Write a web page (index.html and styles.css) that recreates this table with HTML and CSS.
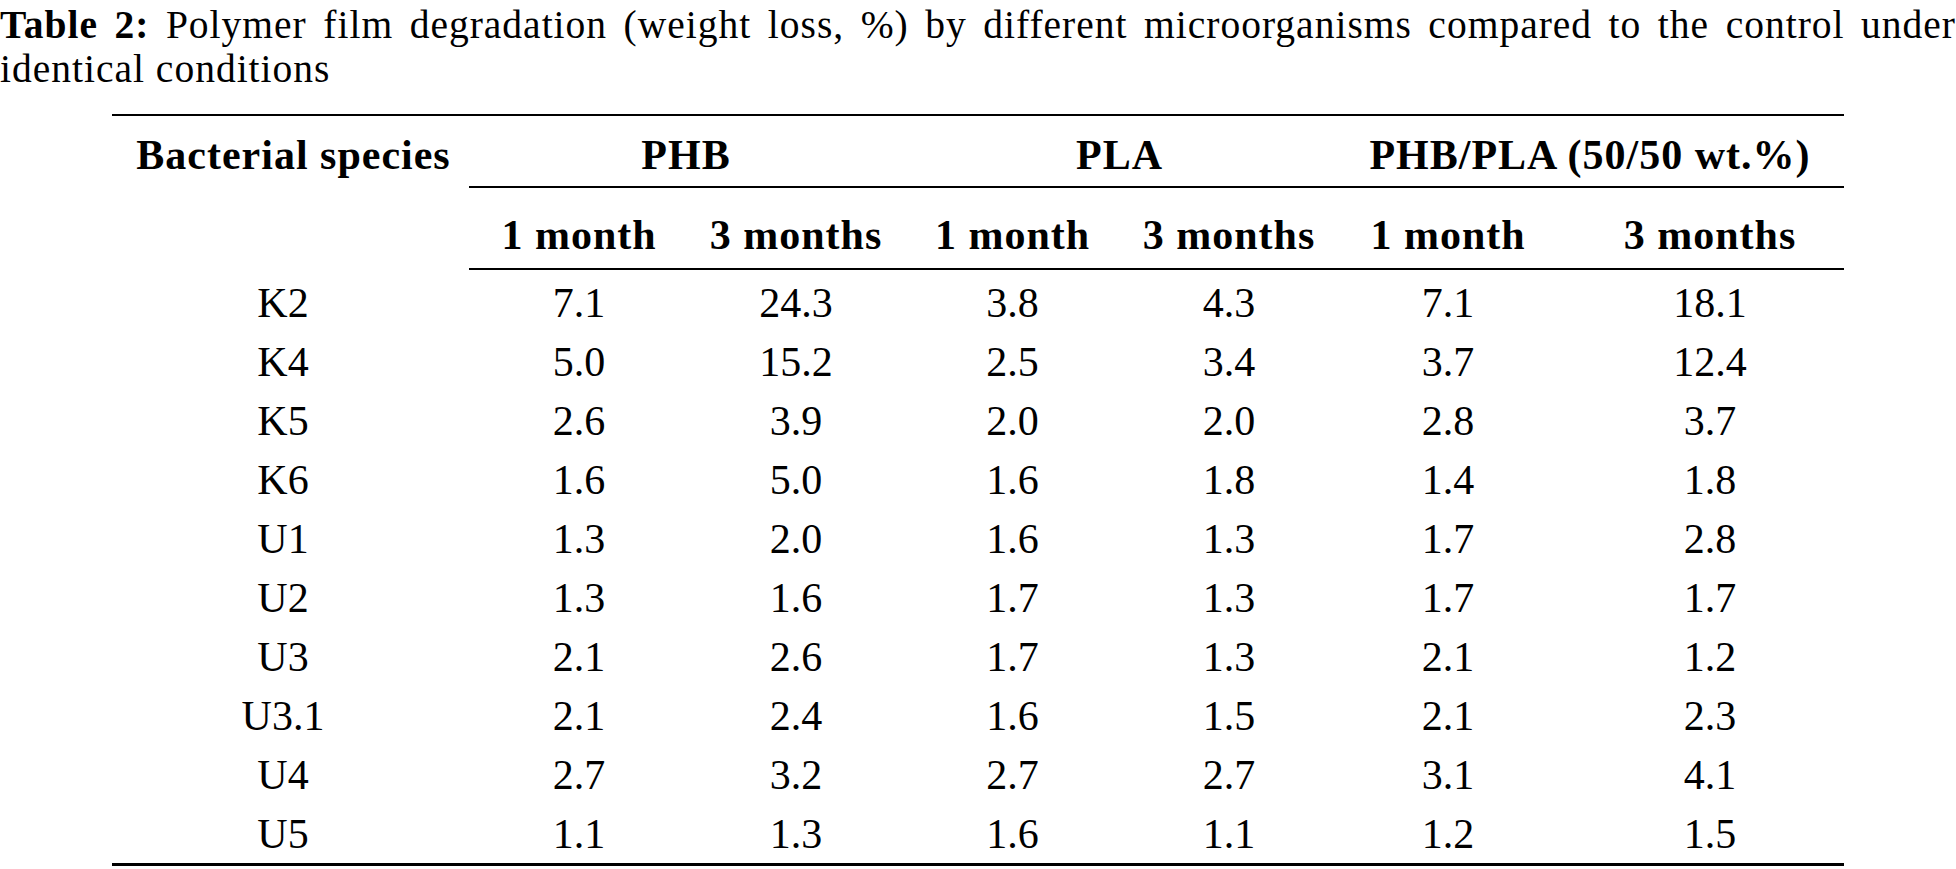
FILE: index.html
```html
<!DOCTYPE html>
<html lang="en">
<head>
<meta charset="utf-8">
<title>Table 2</title>
<link rel="stylesheet" href="styles.css">
</head>
<body>
<div class="page">
  <p class="caption"><b>Table 2:</b> <span>Polymer film degradation (weight loss, %) by different microorganisms compared to the control under</span> <span>identical conditions</span></p>
  <table class="data">
    <colgroup>
      <col class="c1"><col class="c2"><col class="c3"><col class="c4"><col class="c5"><col class="c6"><col class="c7">
    </colgroup>
    <thead>
      <tr class="h1">
        <th rowspan="2" class="species">Bacterial species</th>
        <th colspan="2" class="grp"><span class="gl">PHB</span></th>
        <th colspan="2" class="grp"><span class="gl">PLA</span></th>
        <th colspan="2" class="grp last"><span class="gl">PHB/PLA (50/50 wt.%)</span></th>
      </tr>
      <tr class="h2">
        <th>1 month</th><th>3 months</th>
        <th>1 month</th><th>3 months</th>
        <th>1 month</th><th class="r">3 months</th>
      </tr>
    </thead>
    <tbody>
      <tr><td class="sp">K2</td><td>7.1</td><td>24.3</td><td>3.8</td><td>4.3</td><td>7.1</td><td class="r">18.1</td></tr>
      <tr><td class="sp">K4</td><td>5.0</td><td>15.2</td><td>2.5</td><td>3.4</td><td>3.7</td><td class="r">12.4</td></tr>
      <tr><td class="sp">K5</td><td>2.6</td><td>3.9</td><td>2.0</td><td>2.0</td><td>2.8</td><td class="r">3.7</td></tr>
      <tr><td class="sp">K6</td><td>1.6</td><td>5.0</td><td>1.6</td><td>1.8</td><td>1.4</td><td class="r">1.8</td></tr>
      <tr><td class="sp">U1</td><td>1.3</td><td>2.0</td><td>1.6</td><td>1.3</td><td>1.7</td><td class="r">2.8</td></tr>
      <tr><td class="sp">U2</td><td>1.3</td><td>1.6</td><td>1.7</td><td>1.3</td><td>1.7</td><td class="r">1.7</td></tr>
      <tr><td class="sp">U3</td><td>2.1</td><td>2.6</td><td>1.7</td><td>1.3</td><td>2.1</td><td class="r">1.2</td></tr>
      <tr><td class="sp">U3.1</td><td>2.1</td><td>2.4</td><td>1.6</td><td>1.5</td><td>2.1</td><td class="r">2.3</td></tr>
      <tr><td class="sp">U4</td><td>2.7</td><td>3.2</td><td>2.7</td><td>2.7</td><td>3.1</td><td class="r">4.1</td></tr>
      <tr><td class="sp">U5</td><td>1.1</td><td>1.3</td><td>1.6</td><td>1.1</td><td>1.2</td><td class="r">1.5</td></tr>
    </tbody>
  </table>
</div>
</body>
</html>
```

FILE: styles.css
```css
html, body {
  margin: 0;
  padding: 0;
  background: #ffffff;
}

body {
  font-family: "Liberation Serif", "Times New Roman", serif;
  color: #000000;
}

.page {
  width: 1956px;
}

.caption {
  margin: 3px 0 0 0;
  font-size: 39.5px;
  letter-spacing: 1px;
  line-height: 44px;
  text-align: justify;
  text-align-last: left;
}

.caption b {
  font-weight: 700;
}

.data {
  margin: 23px 0 0 112px;
  width: 1732px;
  border-collapse: collapse;
  table-layout: fixed;
  font-size: 42px;
  border-top: 2px solid #000;
  border-bottom: 3px solid #000;
}

.c1 { width: 357px; }
.c2 { width: 220px; }
.c3 { width: 214px; }
.c4 { width: 219px; }
.c5 { width: 214px; }
.c6 { width: 224px; }
.c7 { width: 284px; }

.data th {
  font-weight: 700;
  letter-spacing: 1px;
  text-align: center;
  padding: 0;
  line-height: 50px;
  white-space: nowrap;
}

.h1 th {
  padding-top: 14px;
}

.h1 th.species {
  vertical-align: top;
  padding-left: 6px;
}

.grp {
  padding: 14px 9px 0 9px;
}

.grp.last {
  padding-right: 0;
}

.gl {
  display: block;
  padding-bottom: 6px;
  border-bottom: 2px solid #000;
}

.h2 th {
  padding-top: 22px;
  padding-bottom: 8px;
  border-bottom: 2px solid #000;
}

.h2 th.r,
.data td.r {
  padding-left: 16px;
}

.data td {
  text-align: center;
  padding: 4px 0;
  line-height: 51px;
}

.data td.sp {
  padding-right: 15px;
}

.data tbody tr:first-child td {
  padding-top: 8px;
}

.data tbody tr:last-child td {
  padding-bottom: 3px;
}
```
